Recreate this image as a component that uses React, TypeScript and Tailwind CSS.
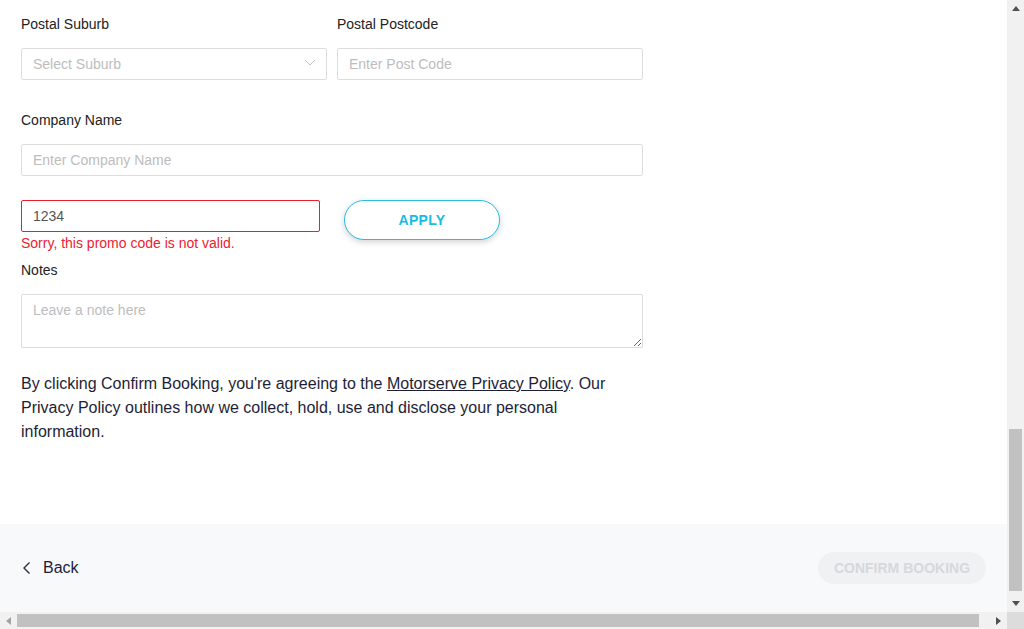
import React from 'react';

const inputBase =
  'h-8 w-full border border-[#dcdcdc] rounded-[2px] px-[11px] text-[14px] text-[#555] placeholder:text-[#bdbdbd] outline-none bg-white';

const Label: React.FC<{ children: React.ReactNode }> = ({ children }) => (
  <label className="block text-[14px] leading-4 text-[#222]">{children}</label>
);

const App: React.FC = () => {
  return (
    <div
      className="w-[1024px] h-[629px] overflow-hidden flex flex-col bg-white"
      style={{ fontFamily: '"Liberation Sans", Arial, sans-serif' }}
    >
      <div className="flex flex-1 min-h-0">
        {/* page */}
        <div className="flex-1 flex flex-col min-w-0">
          <div className="flex-1 pl-[21px] pt-[16px]">
            <div className="w-[622px]">
              <div className="flex gap-[10px]">
                <div className="w-[306px]">
                  <Label>Postal Suburb</Label>
                  <div className="relative mt-4">
                    <input className={inputBase} placeholder="Select Suburb" readOnly />
                    <svg
                      className="absolute right-[11px] top-[11px]"
                      width="12"
                      height="8"
                      viewBox="0 0 12 8"
                      fill="none"
                    >
                      <path d="M1 1l5 5 5-5" stroke="#c4c4c4" strokeWidth="1" />
                    </svg>
                  </div>
                </div>
                <div className="w-[306px]">
                  <Label>Postal Postcode</Label>
                  <input className={`${inputBase} mt-4`} placeholder="Enter Post Code" />
                </div>
              </div>

              <div className="mt-8">
                <Label>Company Name</Label>
                <input className={`${inputBase} mt-4`} placeholder="Enter Company Name" />
              </div>

              <div className="mt-6 flex items-start gap-6">
                <div className="w-[299px]">
                  <input
                    className="h-8 w-full border border-[#e8202e] rounded-[2px] px-[11px] text-[14px] text-[#555] outline-none bg-white"
                    defaultValue="1234"
                  />
                  <p className="mt-[3px] text-[14px] leading-4 text-[#ec2230]">
                    Sorry, this promo code is not valid.
                  </p>
                </div>
                <button className="w-[156px] h-10 rounded-full border border-[#27bde0] bg-white text-[#18bce1] text-[14px] font-bold tracking-[0.3px] shadow-[0_2px_6px_rgba(0,0,0,0.18)]">
                  APPLY
                </button>
              </div>

              <div className="mt-[11px]">
                <Label>Notes</Label>
                <textarea
                  className="mt-4 block w-full h-[54px] border border-[#dcdcdc] rounded-[2px] px-[11px] pt-[5px] text-[14px] text-[#555] placeholder:text-[#bdbdbd] outline-none bg-white"
                  placeholder="Leave a note here"
                />
              </div>

              <p className="mt-[24px] w-[600px] text-[16px] leading-6 text-[#1e1e36]">
                By clicking Confirm Booking, you're agreeing to the{' '}
                <a className="underline">Motorserve Privacy Policy</a>. Our Privacy Policy outlines how we
                collect, hold, use and disclose your personal information.
              </p>
            </div>
          </div>

          {/* footer */}
          <div className="h-[88px] bg-[#f8f9fa] flex items-center justify-between pl-[22px] pr-[21px]">
            <button className="flex items-center gap-[11px] text-[16px] text-[#1e1e3c]">
              <svg width="10" height="14" viewBox="0 0 10 14" fill="none">
                <path d="M7.5 1.5L2 7l5.5 5.5" stroke="#2a2a40" strokeWidth="1.4" />
              </svg>
              Back
            </button>
            <button className="w-[168px] h-[32px] rounded-full bg-[#f0f1f3] text-[#d6d8dc] text-[14px] font-bold">
              CONFIRM BOOKING
            </button>
          </div>
        </div>

        {/* vertical scrollbar */}
        <div className="w-[17px] bg-[#f1f1f1] flex flex-col items-center">
          <div className="h-[17px] flex items-center justify-center">
            <svg width="8" height="5" viewBox="0 0 8 5">
              <path d="M0 5L4 0l4 5z" fill="#505050" />
            </svg>
          </div>
          <div className="flex-1 w-full px-[2px] flex flex-col justify-end">
            <div className="h-[162px] bg-[#c1c1c1] mb-[4px]" />
          </div>
          <div className="h-[17px] flex items-center justify-center">
            <svg width="8" height="5" viewBox="0 0 8 5">
              <path d="M0 0h8L4 5z" fill="#505050" />
            </svg>
          </div>
        </div>
      </div>

      {/* horizontal scrollbar */}
      <div className="h-[17px] flex bg-[#f1f1f1]">
        <div className="w-[17px] flex items-center justify-center">
          <svg width="5" height="8" viewBox="0 0 5 8">
            <path d="M5 0v8L0 4z" fill="#a3a3a3" />
          </svg>
        </div>
        <div className="flex-1 py-[2px]">
          <div className="h-full w-[962px] bg-[#c1c1c1]" />
        </div>
        <div className="w-[17px] flex items-center justify-center">
          <svg width="5" height="8" viewBox="0 0 5 8">
            <path d="M0 0v8l5-4z" fill="#505050" />
          </svg>
        </div>
        <div className="w-[17px] bg-[#dcdcdc]" />
      </div>
    </div>
  );
};

export default App;
